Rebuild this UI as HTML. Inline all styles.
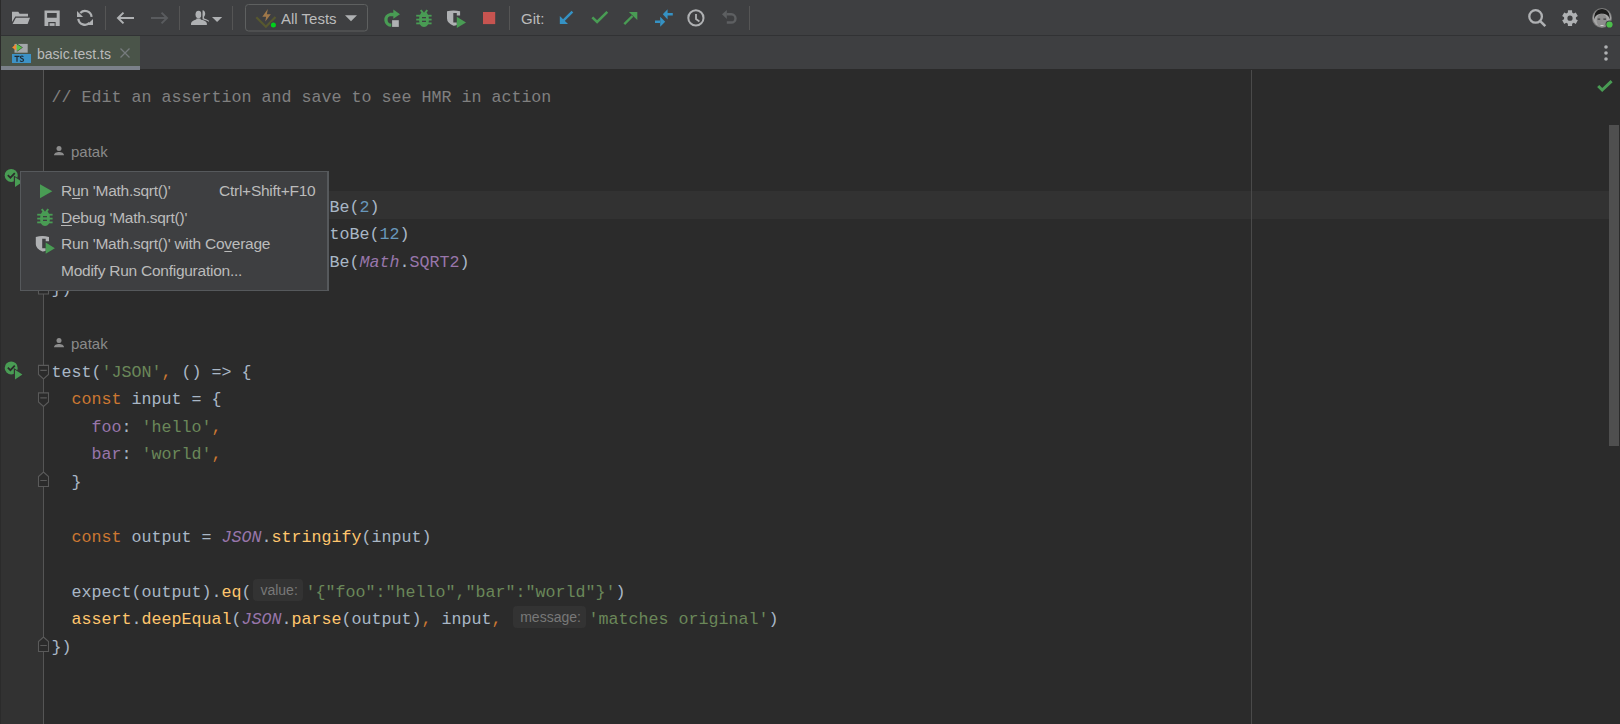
<!DOCTYPE html>
<html><head><meta charset="utf-8">
<style>
*{margin:0;padding:0;box-sizing:border-box}
html,body{width:1620px;height:724px;overflow:hidden;background:#2B2B2B}
body{position:relative;font-family:"Liberation Sans",sans-serif}
.abs{position:absolute}
#toolbar{left:0;top:0;width:1620px;height:35px;background:#3E3F41}
#tbborder{left:0;top:35px;width:1620px;height:1px;background:#313234}
#tabbar{left:0;top:36px;width:1620px;height:33px;background:#3E3F41}
#tab{left:1px;top:36px;width:139px;height:33px;background:#4A5449}
#tabul{left:1px;top:66px;width:139px;height:4px;z-index:2;background:#7B818A}
#editor{left:0;top:70px;width:1620px;height:654px;background:#2B2B2B}
#gutter{left:1px;top:70px;width:42px;height:654px;background:#323232}
#gline{left:43px;top:70px;width:1px;height:654px;background:#555555}
#leftb{left:0;top:0;width:1px;height:724px;background:#2B2B2B}
.sep{position:absolute;top:6px;width:1px;height:24px;background:#555555}
.ln{position:absolute;left:51.6px;height:27.5px;line-height:27.5px;font-family:"Liberation Mono",monospace;font-size:16.667px;color:#A9B7C6;white-space:pre}
.k{color:#CC7832}.s{color:#6A8759}.n{color:#6897BB}.c{color:#808080}.p{color:#9876AA}.g{color:#9876AA;font-style:italic}.f{color:#FFC66D}
.hint{display:inline-block;position:relative;vertical-align:top;height:27.5px;font-family:"Liberation Sans",sans-serif;font-size:14px;color:#787878}
.hint i{position:absolute;font-style:normal;background:#333333;border-radius:4px;height:22px;line-height:22px;top:0px;text-align:center}
.pop{font-size:15.5px;letter-spacing:-0.25px;line-height:17px;color:#BBBBBB;white-space:pre}
.pop u{text-decoration:underline;text-underline-offset:2px}
.cv{position:absolute;left:71px;font-size:15px;color:#8A8A8A;line-height:17px}
</style></head><body>
<div id="toolbar" class="abs"></div>
<div id="tbborder" class="abs"></div>
<div id="tabbar" class="abs"></div>
<div id="tab" class="abs"></div>
<div id="tabul" class="abs"></div>
<div id="editor" class="abs"></div>
<div id="gutter" class="abs"></div>
<div id="gline" class="abs"></div>
<div id="leftb" class="abs"></div>

<!-- toolbar separators -->
<div class="sep" style="left:105px"></div>
<div class="sep" style="left:179px"></div>
<div class="sep" style="left:232px"></div>
<div class="sep" style="left:509px"></div>
<div class="sep" style="left:749px"></div>


<!-- toolbar icons -->
<svg class="abs" style="left:0;top:0" width="1620" height="36" viewBox="0 0 1620 36">
 <g fill="#AFB1B3">
  <path d="M12 11.8h6.3l1.3 2H28v2.8H15.3L12 22z"/>
  <path d="M15.9 17.8H30l-2.4 6.3H12.6z"/>
  <path d="M44.5 10.6h15.2v15.3H44.5z M47.1 13.1v4.7h9.6v-4.7z M48.3 21.9v4h7.3v-4z"/>
  <rect x="49.6" y="23.2" width="5" height="2.7"/>
 </g>
 <g fill="none" stroke="#AFB1B3" stroke-width="2.2">
  <path d="M80.3 12.9A6.6 6.6 0 0 1 91.6 16.8"/>
  <path d="M78.3 18.8A6.6 6.6 0 0 0 89.6 22.7"/>
 </g>
 <g fill="#AFB1B3">
  <path d="M77 11v6.1h6.1z"/>
  <path d="M93 19v6.1h-6.1z"/>
 </g>
 <!-- back / forward -->
 <g fill="none" stroke-width="2">
  <path d="M134 18H118.5M123.5 12.6L118 18l5.5 5.4" stroke="#AFB1B3"/>
  <path d="M151 18H166.5M161.5 12.6L167 18l-5.5 5.4" stroke="#595B5E"/>
 </g>
 <!-- user -->
 <g fill="#AFB1B3">
  <path d="M202.6 10.2c1.6.2 2.6 1.6 2.6 3.4 0 1.5-.5 2.7-1.3 3.3l.3 1.5c1.9.5 3.9 1.3 5 2.5l-.5.9c-1.3-.9-3.2-1.6-5.5-2.2l-.9-.3z"/>
  <ellipse cx="198.5" cy="14.6" rx="3" ry="3.8"/>
  <path d="M196.5 18.4h4l.3 1.2c2.6.6 5.5 1.6 6 3.4l.1 2.1H191l.1-2.1c.5-1.8 3.4-2.8 5.1-3.4z"/>
  <path d="M212 17h10.2l-5.1 5z"/>
 </g>
 <path d="M201.9 10.6l-.6 .2 .2 8.6 .9.3z" fill="#3E3F41"/>
 <!-- combo -->
 <rect x="245.5" y="4.5" width="122" height="26.5" rx="3" fill="none" stroke="#5E6060" stroke-width="1"/>
 <path d="M256.3 17.3L265.9 26.7 275.5 17" fill="none" stroke="#57582F" stroke-width="2.2"/>
 <path d="M267.8 9L262.3 16.8h3.8l-.8 4.6 5.5-7.2h-3.9z" fill="#A0784A"/>
 <circle cx="273.4" cy="25" r="3.3" fill="#3E3F41"/>
 <circle cx="273.4" cy="25" r="2.5" fill="#00D11B"/>
 <path d="M345 15.2h12l-6 6z" fill="#AFB1B3"/>
 <!-- rerun -->
 <path d="M394 14.5H390.3A5.4 5.4 0 0 0 391.3 25.2" fill="none" stroke="#499C54" stroke-width="3.3"/>
 <path d="M393.3 9.5v9.3l6.7-4.6z" fill="#499C54"/>
 <rect x="392.1" y="20.2" width="6.7" height="6.7" fill="#AFB1B3"/>
 <!-- debug -->
 <g fill="#499C54">
  <path d="M421.3 12.6Q424 11.8 426.7 12.6Q428.9 15 428.9 19.8Q428.9 26.9 424 26.9Q419.1 26.9 419.1 19.8Q419.1 15 421.3 12.6z"/>
  <rect x="416.2" y="14.8" width="15.4" height="1.8"/>
  <rect x="416.2" y="18.7" width="15.4" height="1.8"/>
  <rect x="416.2" y="22.5" width="15.4" height="1.8"/>
 </g>
 <path d="M420.7 10.2l2.3 2.6M427.3 10.2l-2.3 2.6" stroke="#499C54" stroke-width="2" fill="none"/>
 <rect x="422" y="17" width="4" height="1.3" fill="#3E3F41"/>
 <rect x="422" y="20.7" width="4" height="1.3" fill="#3E3F41"/>
 <!-- coverage -->
 <path d="M447 11.3Q453.5 9.5 460.1 11.3V15.6H456.8V13.1H453.3V22.6H456.8V25Q455 25.9 453.5 25.7Q447 23 447 18.5z" fill="#AFB1B3"/>
 <path d="M456.8 16.7v11.2l9.2-5.5z" fill="#499C54"/>
 <rect x="483" y="12" width="12.2" height="12.1" fill="#C75450"/>
 <!-- git -->
 <path d="M572.4 11.6L563.6 20.4" stroke="#3592C4" stroke-width="2.4" fill="none"/>
 <path d="M559.8 16v8h8.2z" fill="#3592C4"/>
 <path d="M592.3 17.4l4.8 4.6 10.2-10.2" stroke="#499C54" stroke-width="2.6" fill="none"/>
 <path d="M624.3 24.2l8.2-8.2" stroke="#499C54" stroke-width="2.4" fill="none"/>
 <path d="M628.9 12h8.4v8z" fill="#499C54"/>
 <path d="M662.8 14.2l4.8-5v10.2z M667 12.9h5.8v2.6H667z" fill="#3592C4"/>
 <path d="M665.2 21.8l-5-5v10z M655 20.5h5.4v2.6H655z" fill="#3592C4"/>
 <circle cx="695.9" cy="17.9" r="7.6" fill="none" stroke="#AFB1B3" stroke-width="2"/>
 <path d="M696 14v5l3.4 2.4" fill="none" stroke="#AFB1B3" stroke-width="1.8"/>
 <path d="M726.8 14.3H731.4A4.1 4.1 0 0 1 731.4 22.5H726.8" fill="none" stroke="#5D5F61" stroke-width="2.4"/>
 <path d="M722 14.3l4.8-4.4v9z" fill="#5D5F61"/>
 <!-- search / settings -->
 <circle cx="1535.6" cy="16.4" r="6.3" fill="none" stroke="#AFB1B3" stroke-width="2.3"/>
 <path d="M1540 20.8l5.3 5.3" stroke="#AFB1B3" stroke-width="2.5" fill="none"/>
</svg>
<div class="abs" style="left:521px;top:10px;font-size:15px;line-height:17px;color:#BBBBBB">Git:</div>
<div class="abs" style="left:281px;top:10px;font-size:15px;line-height:17px;color:#BBBBBB">All Tests</div>


<!-- tab content -->
<svg class="abs" style="left:0;top:36px" width="160" height="34" viewBox="0 36 160 34">
 <rect x="14.5" y="43.9" width="13.2" height="8.8" fill="#A3A7AA"/>
 <path d="M16.9 43.6v8.2l5.9-4.3z" fill="#2E3A2C"/>
 <path d="M16.9 44.3v6.9l5.2-3.7z" fill="#59C04A"/>
 <path d="M12.1 47.5l4-3.4v6.2z" fill="#F08C30"/>
 <rect x="12" y="54" width="19" height="9" fill="#3D92C6"/>
 <path d="M14.5 56.4h5M17 56.4v5.3" stroke="#1E2A33" stroke-width="1.2" fill="none"/>
 <path d="M23.4 56.6c-.4-.4-.9-.6-1.5-.6-.9 0-1.5.5-1.5 1.2 0 .7.6 1 1.5 1.3.9.3 1.6.6 1.6 1.5 0 .8-.7 1.5-1.7 1.5-.7 0-1.4-.3-1.8-.8" stroke="#1E2A33" stroke-width="1.2" fill="none"/>
 <path d="M120.5 48.5l9 9M129.5 48.5l-9 9" stroke="#767B7D" stroke-width="1.3" fill="none"/>
</svg>
<div class="abs" style="left:37px;top:46px;font-size:14px;line-height:16px;color:#BBBBBB">basic.test.ts</div>

<!-- right icons -->
<svg class="abs" style="left:1500px;top:0" width="120" height="724" viewBox="1500 0 120 724">
 <path fill="#AFB1B3" fill-rule="evenodd" d="M1567.89 12.58 L1567.92 10.37 L1572.08 10.37 L1572.11 12.58 L1573.81 13.56 L1575.74 12.48 L1577.82 16.09 L1575.92 17.22 L1575.92 19.18 L1577.82 20.31 L1575.74 23.92 L1573.81 22.84 L1572.11 23.82 L1572.08 26.03 L1567.92 26.03 L1567.89 23.82 L1566.19 22.84 L1564.26 23.92 L1562.18 20.31 L1564.08 19.18 L1564.08 17.22 L1562.18 16.09 L1564.26 12.48 L1566.19 13.56z M1570 15.6a2.6 2.6 0 1 0 0 5.2a2.6 2.6 0 1 0 0-5.2z"/>
 <circle cx="1602" cy="18" r="10" fill="#7A7A7A"/>
 <circle cx="1602" cy="18" r="9" fill="#A6A6A6"/>
 <path d="M1594.3 19.5c-.6-7 3-10.5 7.7-10.5s8.3 3.5 7.7 10.5c-.6-3.2-2.5-5.8-7.7-5.8s-7.1 2.6-7.7 5.8z" fill="#1C1C1C"/>
 <ellipse cx="1601.8" cy="20.5" rx="5.2" ry="6.8" fill="#8E8E8E"/>
 <path d="M1597.6 19.2h2.6M1603.4 19.2h2.6" stroke="#3E3E3E" stroke-width="1.3"/>
 <path d="M1600.5 25.5h3" stroke="#D0D0D0" stroke-width="1"/>
 <circle cx="1609.5" cy="24.5" r="4" fill="#3E3F41"/>
 <circle cx="1609.5" cy="24.5" r="3.1" fill="#4CBE4B"/>
 <circle cx="1606" cy="47" r="1.8" fill="#AFB1B3"/>
 <circle cx="1606" cy="53" r="1.8" fill="#AFB1B3"/>
 <circle cx="1606" cy="59" r="1.8" fill="#AFB1B3"/>
 <path d="M1598.2 86l4 4 9.4-8.8" stroke="#499C54" stroke-width="3" fill="none"/>
 <rect x="1609" y="125" width="10" height="321" fill="#4F4F4F"/>
</svg>

<!-- current line -->
<div class="abs" style="left:44px;top:191px;width:1565px;height:28px;background:#323232"></div>
<!-- right margin -->
<div class="abs" style="left:1251px;top:70px;width:1px;height:654px;background:#4A4A4A"></div>

<!-- code -->
<div id="code">
<div class="ln" style="top:84.25px"><span class="c">// Edit an assertion and save to see HMR in action</span></div>
<div class="ln" style="top:166.25px">test(<span class="s">'Math.sqrt()'</span><span class="k">,</span> () =&gt; {</div>
<div class="ln" style="top:194.25px">  expect(<span class="g">Math</span>.<span class="f">sqrt</span>(<span class="hint" style="width:28px"></span><span class="n">4</span>)).toBe(<span class="n">2</span>)</div>
<div class="ln" style="top:221.25px">  expect(<span class="g">Math</span>.<span class="f">sqrt</span>(<span class="hint" style="width:28px"></span><span class="n">144</span>)).toBe(<span class="n">12</span>)</div>
<div class="ln" style="top:249.25px">  expect(<span class="g">Math</span>.<span class="f">sqrt</span>(<span class="hint" style="width:28px"></span><span class="n">2</span>)).toBe(<span class="g">Math</span>.<span class="p">SQRT2</span>)</div>
<div class="ln" style="top:276.25px">})</div>
<div class="ln" style="top:359.25px">test(<span class="s">'JSON'</span><span class="k">,</span> () =&gt; {</div>
<div class="ln" style="top:386.25px">  <span class="k">const </span>input = {</div>
<div class="ln" style="top:414.25px">    <span class="p">foo</span>: <span class="s">'hello'</span><span class="k">,</span></div>
<div class="ln" style="top:441.25px">    <span class="p">bar</span>: <span class="s">'world'</span><span class="k">,</span></div>
<div class="ln" style="top:469.25px">  }</div>
<div class="ln" style="top:524.25px">  <span class="k">const </span>output = <span class="g">JSON</span>.<span class="f">stringify</span>(input)</div>
<div class="ln" style="top:579.25px">  expect(output).<span class="f">eq</span>(<span class="hint" style="width:54px"><i style="left:1.6px;width:50px;padding-left:2px">value:</i></span><span class="s">'{"foo":"hello","bar":"world"}'</span>)</div>
<div class="ln" style="top:606.25px">  <span class="f">assert</span>.<span class="f">deepEqual</span>(<span class="g">JSON</span>.<span class="f">parse</span>(output)<span class="k">,</span> input<span class="k">,</span> <span class="hint" style="width:77px"><i style="left:1.6px;width:73px;padding-left:2px">message:</i></span><span class="s">'matches original'</span>)</div>
<div class="ln" style="top:634.25px">})</div>
</div>

<div class="cv" style="top:143px">patak</div>
<div class="cv" style="top:335px">patak</div>


<!-- gutter: run icons & fold markers -->
<svg class="abs" style="left:0;top:70px" width="60" height="654" viewBox="0 70 60 654">
 <g id="runic">
  <circle cx="11.2" cy="175.4" r="6.5" fill="#499C54"/>
  <path d="M7.8 175.2l2.6 2.5 4.4-4.6" stroke="#2B2B2B" stroke-width="1.7" fill="none"/>
  <path d="M13.8 175.6v12.6l10.2-6.3z" fill="#323232"/>
  <path d="M15 177.3v9.6l7.4-4.8z" fill="#499C54"/>
 </g>
 <g transform="translate(0 192.5)">
  <circle cx="11.2" cy="175.4" r="6.5" fill="#499C54"/>
  <path d="M7.8 175.2l2.6 2.5 4.4-4.6" stroke="#2B2B2B" stroke-width="1.7" fill="none"/>
  <path d="M13.8 175.6v12.6l10.2-6.3z" fill="#323232"/>
  <path d="M15 177.3v9.6l7.4-4.8z" fill="#499C54"/>
 </g>
 <g fill="#2B2B2B" stroke="#5A5A5A" stroke-width="1.1">
  <path d="M38.5 365.4h10v9l-5 4.6-5-4.6z"/>
  <path d="M38.5 392.9h10v9l-5 4.6-5-4.6z"/>
  <path d="M38.5 486.5h10v-10l-5-4.5-5 4.5z"/>
  <path d="M38.5 651.5h10v-10l-5-4.5-5 4.5z"/>
  <path d="M38.5 294h10v-10l-5-4.5-5 4.5z"/>
 </g>
 <path stroke="#5A5A5A" stroke-width="1.2" d="M40.3 370.4h6.5 M40.3 397.9h6.5 M40.3 480.5h6.5 M40.3 645.5h6.5 M40.3 288h6.5"/>
</svg>

<!-- code vision icons -->
<svg class="abs" style="left:50px;top:140px" width="20" height="20" viewBox="50 140 20 20">
 <circle cx="59" cy="148.4" r="2.5" fill="#8C8C8C"/>
 <path d="M54 155.3c0-2.3 2.5-3.4 5-3.4s5 1.1 5 3.4z" fill="#8C8C8C"/>
</svg>
<svg class="abs" style="left:50px;top:332px" width="20" height="20" viewBox="50 140 20 20">
 <circle cx="59" cy="148.4" r="2.5" fill="#8C8C8C"/>
 <path d="M54 155.3c0-2.3 2.5-3.4 5-3.4s5 1.1 5 3.4z" fill="#8C8C8C"/>
</svg>

<!-- popup -->
<div id="popup" class="abs" style="left:20px;top:171px;width:309px;height:120px;background:#3E3F41;border:1px solid #56595C;border-right-width:2px">
</div>
<svg class="abs" style="left:20px;top:171px" width="60" height="120" viewBox="20 171 60 120">
 <path d="M40 184.2v14l12.3-7z" fill="#499C54"/>
 <g fill="#499C54">
  <path d="M42.3 211.6Q45 210.8 47.7 211.6Q49.9 214 49.9 218.8Q49.9 225.9 45 225.9Q40.1 225.9 40.1 218.8Q40.1 214 42.3 211.6z"/>
  <rect x="37.2" y="213.8" width="15.4" height="1.8"/>
  <rect x="37.2" y="217.7" width="15.4" height="1.8"/>
  <rect x="37.2" y="221.5" width="15.4" height="1.8"/>
 </g>
 <path d="M41.7 209.2l2.3 2.6M48.3 209.2l-2.3 2.6" stroke="#499C54" stroke-width="2" fill="none"/>
 <rect x="43" y="216" width="4" height="1.3" fill="#3E3F41"/>
 <rect x="43" y="219.7" width="4" height="1.3" fill="#3E3F41"/>
 <path d="M35.8 237Q42.4 235.2 49 237V241.3H45.7V238.8H42.2V248.3H45.7V250.7Q43.9 251.6 42.4 251.4Q35.8 248.7 35.8 244.2z" fill="#AFB1B3"/>
 <path d="M45.7 242.5v11.2l9.2-5.5z" fill="#499C54"/>
</svg>
<div class="abs pop" style="left:61px;top:182px">R<u>u</u>n 'Math.sqrt()'</div>
<div class="abs pop" style="left:219px;top:182px">Ctrl+Shift+F10</div>
<div class="abs pop" style="left:61px;top:209px"><u>D</u>ebug 'Math.sqrt()'</div>
<div class="abs pop" style="left:61px;top:235px">Run 'Math.sqrt()' with Co<u>v</u>erage</div>
<div class="abs pop" style="left:61px;top:261.5px">Modify Run Configuration...</div>

</body></html>
